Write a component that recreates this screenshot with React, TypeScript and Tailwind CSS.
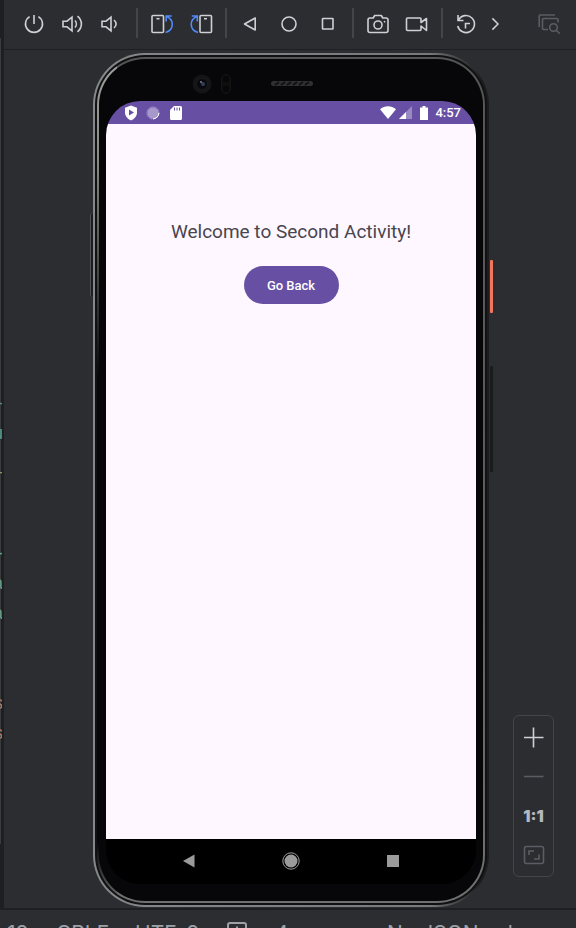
import type { ReactNode } from "react";

function Icon({ children, size = 24 }: { children: ReactNode; size?: number }) {
  return (
    <svg
      width={size}
      height={size}
      viewBox="0 0 24 24"
      fill="none"
      stroke="currentColor"
      strokeWidth="1.6"
      aria-hidden="true"
    >
      {children}
    </svg>
  );
}

function ToolButton({
  label,
  width = "w-[39px]",
  children,
}: {
  label: string;
  width?: string;
  children: ReactNode;
}) {
  return (
    <button
      type="button"
      aria-label={label}
      className={`flex h-8 shrink-0 items-center justify-center ${width}`}
    >
      {children}
    </button>
  );
}

function Separator() {
  return <div className="mb-[2px] h-[30px] w-[2px] shrink-0 bg-[#43454a]" />;
}

function Toolbar() {
  return (
    <header className="flex h-[50px] shrink-0 items-center border-b border-[#1e1f22] pr-2 pb-[1px] text-[#ced0d6]">
      <div className="flex pr-[7px] pl-[11px]">
        <ToolButton label="Power" width="w-[38px]">
          <Icon>
            <path d="M12 3v9M7.600 4.600a8.500 8.500 0 1 0 8.800 0" />
          </Icon>
        </ToolButton>
        <ToolButton label="Volume up" width="w-[38px]">
          <Icon>
            <path d="M3 9.200v5.600h4l5 4V5.200l-5 4zM15 8.500c1.800 2 1.800 5 0 7M17.500 4.200c5.200 4.400 5.200 11.200 0 15.600" />
          </Icon>
        </ToolButton>
        <ToolButton label="Volume down" width="w-[38px]">
          <Icon>
            <path d="M4 9.200v5.600h4l5 4V5.200l-5 4zM16 8c2.800 2.400 2.800 5.600 0 8" />
          </Icon>
        </ToolButton>
      </div>
      <Separator />
      <div className="flex pr-[5px] pl-1">
        <ToolButton label="Rotate left">
          <Icon>
            <rect x="2" y="3.500" width="11.500" height="17" rx="1" />
            <path d="M6.500 6.700h3" />
            <path
              stroke="#548af7"
              d="M15.500 20.500c4.500-1.200 6.800-4.500 6.800-8.500 0-3-1.500-5.500-5.500-7.500M16.200 9.500V4h5.500"
            />
          </Icon>
        </ToolButton>
        <ToolButton label="Rotate right">
          <Icon>
            <rect x="11" y="3.500" width="11.500" height="17" rx="1" />
            <path d="M15 6.700h3" />
            <path
              stroke="#548af7"
              d="M9 20.500c-4.500-1.200-6.800-4.500-6.800-8.500 0-3 1.500-5.500 5.500-7.500M8.300 9.500V4H2.800"
            />
          </Icon>
        </ToolButton>
      </div>
      <Separator />
      <div className="flex pr-[5px] pl-[3px]">
        <ToolButton label="Back">
          <Icon>
            <path d="M17.200 6v12L6.500 12z" strokeLinejoin="round" />
          </Icon>
        </ToolButton>
        <ToolButton label="Home">
          <Icon>
            <circle cx="12" cy="12" r="7" />
          </Icon>
        </ToolButton>
        <ToolButton label="Overview">
          <Icon>
            <rect x="6.500" y="6.500" width="10.500" height="10.500" rx=".5" />
          </Icon>
        </ToolButton>
      </div>
      <Separator />
      <div className="flex pr-[5px] pl-1">
        <ToolButton label="Take screenshot">
          <Icon>
            <path
              d="M4 6h3.200L8.700 3.500h6.600L16.800 6H20a2 2 0 0 1 2 2v10.500a2 2 0 0 1-2 2H4a2 2 0 0 1-2-2V8a2 2 0 0 1 2-2z"
              strokeLinejoin="round"
            />
            <circle cx="12" cy="13" r="4" />
            <path d="M17.800 9.700h1.500" />
          </Icon>
        </ToolButton>
        <ToolButton label="Record screen">
          <Icon>
            <path
              d="M16 10.500V7a1 1 0 0 0-1-1H2.500a1 1 0 0 0-1 1v10.500a1 1 0 0 0 1 1H15a1 1 0 0 0 1-1V14l5.500 4.500v-12z"
              strokeLinejoin="round"
            />
          </Icon>
        </ToolButton>
      </div>
      <Separator />
      <div className="flex pl-[3px]">
        <ToolButton label="Snapshots">
          <Icon>
            <path d="M4 3v5.500h5.500M4.500 8A8.500 8.500 0 1 1 3.700 14M11.500 16.500v-5H16" />
          </Icon>
        </ToolButton>
        <ToolButton label="More" width="w-[19px]">
          <Icon size={18}>
            <path d="M8.500 4.500L16 12l-7.500 7.500" strokeWidth="2" />
          </Icon>
        </ToolButton>
      </div>
      <div className="ml-auto flex text-[#5a5d63]">
        <ToolButton label="Layout inspector">
          <Icon>
            <path d="M2.200 15V4a1 1 0 0 1 1-1H18M11 17.500H6.500a1 1 0 0 1-1-1v-9a1 1 0 0 1 1-1H20a1 1 0 0 1 1 1v3" />
            <circle cx="16.500" cy="15.500" r="3.800" />
            <path d="M19.300 18.300l3.500 3.500" />
          </Icon>
        </ToolButton>
      </div>
    </header>
  );
}

const gutter = [
  { text: "-", tone: "text-[#5c8f7b]" },
  { text: "u", tone: "text-[#5c9a82]" },
  { text: "_", tone: "text-[#8a9a6a]" },
  { text: "", tone: "" },
  { text: "", tone: "" },
  { text: "-", tone: "text-[#5cae82]" },
  { text: "a", tone: "text-[#6a9c80]" },
  { text: "a", tone: "text-[#6a9c80]" },
  { text: "", tone: "" },
  { text: "", tone: "" },
  { text: "s", tone: "text-[#b87a62]" },
  { text: "s", tone: "text-[#b87a62]" },
];

function EditorEdge() {
  return (
    <aside className="w-1 shrink-0 overflow-hidden bg-[#1e1f22] pt-[38px]">
      <div className="h-[806px] w-[2px] overflow-hidden bg-[linear-gradient(90deg,#393b3d_50%,transparent_50%)] pt-[350px] font-['Liberation_Sans',sans-serif] text-[18px] leading-[30px]">
        {gutter.map((row, i) => (
          <div key={i} className={`flex h-[30px] w-[3px] justify-end ${row.tone}`}>
            {row.text}
          </div>
        ))}
      </div>
    </aside>
  );
}

function AndroidStatusBar() {
  return (
    <div className="flex h-[23px] shrink-0 items-center bg-[#6750a4] pr-[15px] pl-[18px] text-white">
      <svg width="14" height="16" viewBox="0 0 14 16" aria-hidden="true">
        <path fill="currentColor" d="M7 .5l6 2.300v4.500c0 4-2.600 6.800-6 8.200-3.400-1.400-6-4.200-6-8.200V2.800z" />
        <path fill="#6750a4" d="M5 4.500v6L10 7.500z" />
      </svg>
      <svg className="ml-2" width="14" height="14" viewBox="0 0 14 14" aria-hidden="true">
        <circle cx="7" cy="7" r="5.500" fill="#a899cd" />
        <circle cx="7" cy="7" r="6" fill="none" stroke="#c6bce2" strokeWidth="1" strokeDasharray="1 1" />
        <path d="M12.800 7A5.800 5.800 0 0 1 7 12.800" fill="none" stroke="#fff" strokeWidth="1" />
      </svg>
      <svg className="ml-[10px]" width="12" height="14" viewBox="0 0 12 14" aria-hidden="true">
        <path fill="currentColor" d="M4 0h6.500A1.500 1.500 0 0 1 12 1.500v11a1.500 1.500 0 0 1-1.500 1.500h-9A1.500 1.500 0 0 1 0 12.500V4z" />
        <path stroke="#6750a4" d="M4.500 1.500v3M7 1.500v3M9.500 1.500v3" />
      </svg>
      <svg className="ml-auto" width="16" height="13" viewBox="0 0 16 13" aria-hidden="true">
        <path fill="currentColor" d="M8 13L0 3.200C4.500-.8 11.500-.8 16 3.200z" />
      </svg>
      <svg className="ml-[3px]" width="13" height="13" viewBox="0 0 13 13" aria-hidden="true">
        <path fill="#9a8ac4" d="M13 0v13H0z" />
        <path fill="currentColor" d="M7 6v7H0z" />
      </svg>
      <svg className="ml-2" width="8" height="14" viewBox="0 0 8 14" aria-hidden="true">
        <path fill="currentColor" d="M2.500 0h3v1.500H8V14H0V1.500h2.500z" />
      </svg>
      <span className="ml-[7px] text-[13px] leading-[23px] font-medium">4:57</span>
    </div>
  );
}

function Screen() {
  return (
    <div className="flex min-h-0 flex-1 flex-col overflow-hidden rounded-[34px] bg-black font-['Roboto',sans-serif]">
      <AndroidStatusBar />
      <main className="flex flex-1 flex-col items-center bg-[#fef7ff] pt-24">
        <h1 className="text-[19px] leading-6 text-[#49454f]">Welcome to Second Activity!</h1>
        <button
          type="button"
          className="mt-[22px] h-[38px] w-[95px] rounded-full bg-[#6750a4] pt-[2px] text-[13px] font-medium text-white"
        >
          Go Back
        </button>
      </main>
      <nav className="flex h-[45px] shrink-0 items-center justify-center gap-[83px] pb-[1px] text-[#9b9b9b]">
        <button type="button" aria-label="Device back">
          <svg width="20" height="20" viewBox="0 0 20 20" aria-hidden="true">
            <path fill="currentColor" d="M15.500 3.500v13L4 10z" />
          </svg>
        </button>
        <button type="button" aria-label="Device home">
          <svg width="18" height="18" viewBox="0 0 18 18" aria-hidden="true">
            <circle cx="9" cy="9" r="6.500" fill="currentColor" />
            <circle cx="9" cy="9" r="8.200" fill="none" stroke="currentColor" />
          </svg>
        </button>
        <button type="button" aria-label="Device overview">
          <svg width="20" height="20" viewBox="0 0 20 20" aria-hidden="true">
            <path fill="currentColor" d="M4 4h12v12H4z" />
          </svg>
        </button>
      </nav>
    </div>
  );
}

function Phone() {
  return (
    <div className="relative flex w-[396px] flex-col rounded-[52px] bg-[linear-gradient(90deg,#85878a_0%,#77797b_85%,#1c1d1f_98%)] p-[2px]">
      <div className="absolute top-[160px] -left-[3px] h-[84px] w-[3px] rounded-l border-l border-[#505255] bg-[#1b1c1e]" />
      <div className="absolute top-[207px] -right-[4px] h-[53px] w-[3px] rounded-[1px] bg-[#f5745c]" />
      <div className="absolute top-[313px] -right-[4px] h-[106px] w-[3px] rounded-[1px] bg-[#191b1c]" />
      <div className="flex min-h-0 flex-1 flex-col rounded-[50px] bg-[#101112] p-[2px]">
        <div className="flex min-h-0 flex-1 flex-col rounded-[48px] p-[2px] [background:linear-gradient(180deg,#a0a09c_0%,#8a8a86_12%,#08080a_38%,#08080a_93%,transparent_100%)_left/20px_100%_no-repeat,linear-gradient(180deg,#555_0%,#5c5c5c_50%,#707070_100%)]">
          <div className="flex min-h-0 flex-1 flex-col rounded-[46px] bg-[#070608] px-[7px] pb-[17px]">
            <div className="flex h-[42px] shrink-0 items-center pt-[3px] pl-[86px]">
              <svg width="130" height="24" viewBox="0 0 130 24" aria-hidden="true">
                <circle cx="10" cy="14" r="9.500" fill="#151516" />
                <circle cx="10" cy="14" r="5.500" fill="#08090c" stroke="#1b1b1f" />
                <circle cx="11" cy="14" r="2" fill="#343f5c" />
                <circle cx="9" cy="12" r="1" fill="#7a7d88" />
                <rect x="29.500" y="4.500" width="9" height="19" rx="4.500" fill="#0e0e0f" stroke="#131314" />
                <circle cx="34" cy="9" r="3" fill="#070708" />
                <circle cx="34" cy="19" r="3" fill="#070708" />
                <rect x="79" y="11" width="42" height="5" rx="2.500" fill="#303031" />
                <path
                  stroke="#111"
                  strokeWidth="2"
                  d="M83 15l4-3M89 15l4-3M95 15l4-3M101 15l4-3M107 15l4-3M113 15l4-3"
                />
              </svg>
            </div>
            <Screen />
          </div>
        </div>
      </div>
    </div>
  );
}

function ZoomControls() {
  return (
    <div className="absolute right-[22px] bottom-[31px] flex w-[41px] flex-col items-center rounded-md border border-[#43454a] py-[2px] text-[#ced0d6]">
      <button type="button" aria-label="Zoom in" className="flex h-[39px] w-full items-center justify-center">
        <Icon>
          <path d="M11.500 1.500v20M2 11.500h19.500" />
        </Icon>
      </button>
      <button
        type="button"
        aria-label="Zoom out"
        className="flex h-[39px] w-full items-center justify-center text-[#5a5d63]"
      >
        <Icon>
          <path d="M2 11.500h19.500" />
        </Icon>
      </button>
      <button
        type="button"
        className="flex h-[39px] w-full items-center justify-center font-['Inter',sans-serif] text-[16px] font-black text-[#b4b8bf]"
      >
        1:1
      </button>
      <button
        type="button"
        aria-label="Zoom to fit"
        className="flex h-[39px] w-full items-center justify-center text-[#5a5d63]"
      >
        <Icon>
          <rect x="2.500" y="3.500" width="19" height="17" rx="2" />
          <path d="M7 12V8h5M17 11.500V16h-5" />
        </Icon>
      </button>
    </div>
  );
}

function StatusBar() {
  return (
    <footer className="flex h-5 shrink-0 items-start overflow-hidden border-t-2 border-[#1e1f22] pt-3 pl-[7px] font-['Inter',sans-serif] text-[21px] leading-6 whitespace-nowrap text-[#9da0a8]">
      <span className="w-[49px] shrink-0">18</span>
      <span className="w-[79px] shrink-0">CRLF</span>
      <span className="w-[92px] shrink-0">UTF-8</span>
      <svg className="mr-7 shrink-0" width="20" height="20" viewBox="0 0 20 20" fill="none" stroke="currentColor" strokeWidth="2" aria-hidden="true">
        <rect x="1" y="1" width="18" height="18" rx="2" />
        <path d="M10 4.500v11" />
      </svg>
      <span className="w-[112px] shrink-0">4 spaces</span>
      <span>No JSON schema</span>
    </footer>
  );
}

export default function App() {
  return (
    <div className="flex h-screen flex-col overflow-hidden bg-[#2b2d30]">
      <div className="flex min-h-0 flex-1">
        <EditorEdge />
        <div className="flex min-w-0 flex-1 flex-col">
          <Toolbar />
          <section className="relative flex min-h-0 flex-1 justify-center pt-[3px] pb-[1px] pl-[2px]">
            <Phone />
            <ZoomControls />
          </section>
        </div>
      </div>
      <StatusBar />
    </div>
  );
}
